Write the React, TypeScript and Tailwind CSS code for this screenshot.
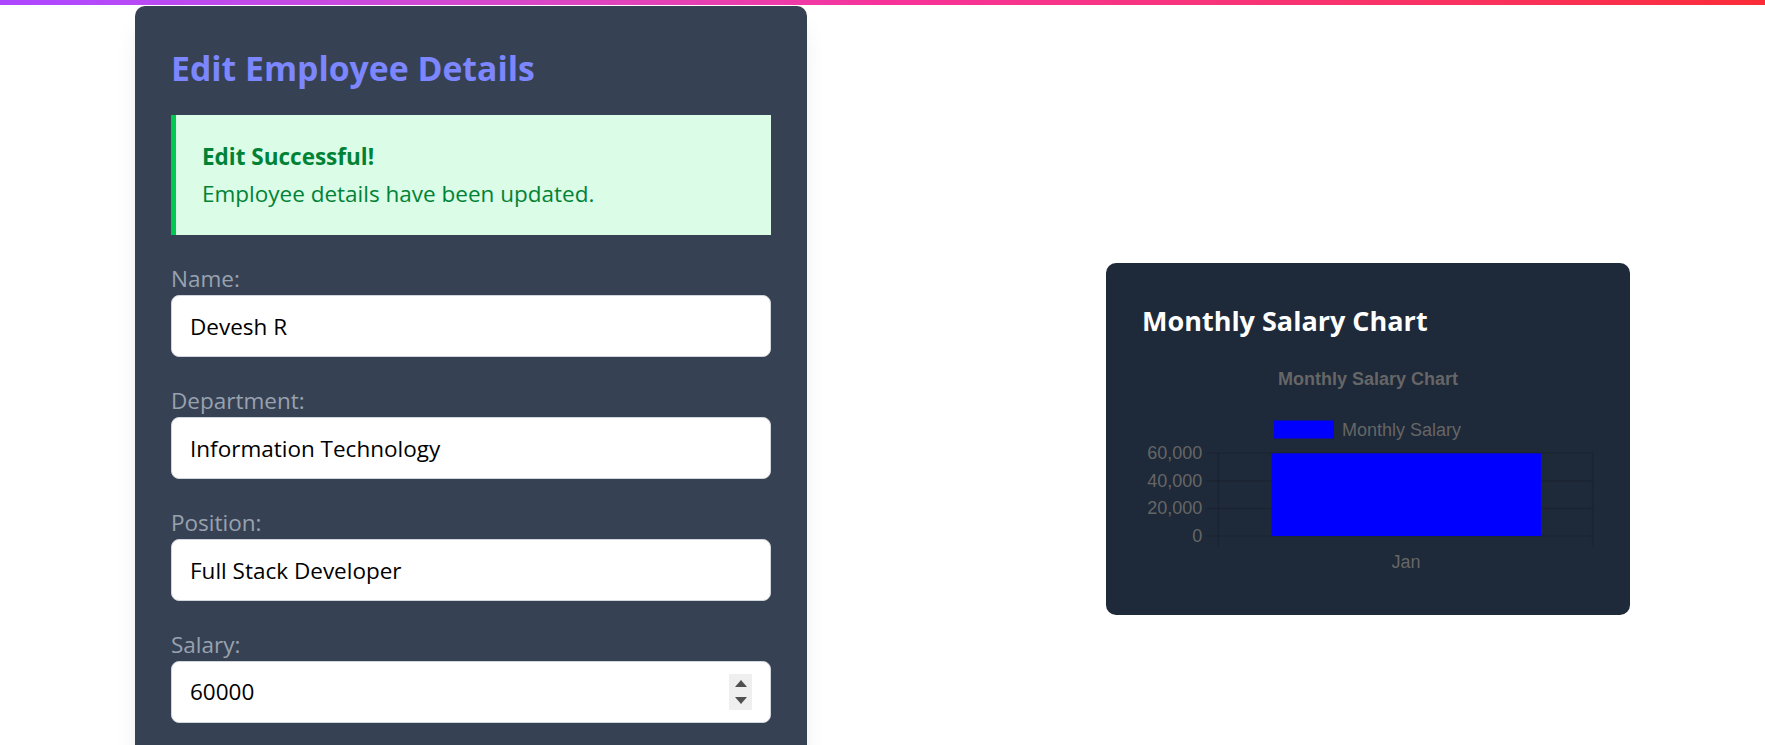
import React from "react";

const fields = [
  { label: "Name:", value: "Devesh R" },
  { label: "Department:", value: "Information Technology" },
  { label: "Position:", value: "Full Stack Developer" },
];

// bar chart drawn the way chart.js renders it (scaled canvas)
const SalaryChart: React.FC = () => {
  const grid = [99.3, 126.9, 154.5, 182];
  const ticks = ["60,000", "40,000", "20,000", "0"];

  return (
    <svg
      width="452"
      height="226"
      viewBox="0 0 452 226"
      className="block font-['Liberation_Sans',Arial,sans-serif]"
    >
      <text x="226" y="31" textAnchor="middle" fontWeight="bold" fontSize="18" fill="#666">
        Monthly Salary Chart
      </text>

      {/* legend */}
      <rect x="132" y="66.5" width="60" height="18" fill="#0000ff" />
      <text x="200" y="81.7" fontSize="18" fill="#666">
        Monthly Salary
      </text>

      {/* grid */}
      {grid.map((y) => (
        <line key={y} x1="64.7" x2="450.7" y1={y} y2={y} stroke="rgba(0,0,0,0.12)" strokeWidth="1.5" />
      ))}
      <line x1="76.3" x2="76.3" y1="99.3" y2="192.7" stroke="rgba(0,0,0,0.12)" strokeWidth="1.5" />
      <line x1="450.7" x2="450.7" y1="99.3" y2="192.7" stroke="rgba(0,0,0,0.12)" strokeWidth="1.5" />

      {/* bar */}
      <rect x="129.7" y="99.3" width="269.3" height="82.7" fill="#0000ff" />

      {ticks.map((t, i) => (
        <text key={t} x="60.3" y={grid[i] + 5.6} textAnchor="end" fontSize="18" fill="#666">
          {t}
        </text>
      ))}
      <text x="264" y="214" textAnchor="middle" fontSize="18" fill="#666">
        Jan
      </text>
    </svg>
  );
};

const App: React.FC = () => {
  return (
    <div className="min-h-screen bg-white font-['Open_Sans',sans-serif]">
      <div className="h-[5px] bg-linear-to-r from-purple-500 via-pink-500 to-red-500" />

      <div className="mt-px flex items-start justify-between px-[135px]">
        {/* Edit form */}
        <div className="w-[672px] rounded-[10px] bg-gray-700 p-9 shadow-xl">
          <h1 className="mb-[21px] text-[33.75px] font-bold leading-[52px] text-indigo-400">
            Edit Employee Details
          </h1>

          <div className="mb-[28px] border-l-[5px] border-green-500 bg-green-100 pt-[26px] pb-[26px] pl-[26px] pr-6 text-[22.5px] leading-[31px] text-green-700">
            <p className="mb-[6px] font-bold">Edit Successful!</p>
            <p>Employee details have been updated.</p>
          </div>

          {fields.map((f) => (
            <div key={f.label} className="mb-[28px]">
              <label className="block text-[22.5px] leading-[32px] text-gray-400">{f.label}</label>
              <input
                type="text"
                defaultValue={f.value}
                className="block h-[62px] w-full rounded-lg border border-gray-300 bg-white px-[18px] text-[22.5px] text-black outline-none"
              />
            </div>
          ))}

          <div>
            <label className="block text-[22.5px] leading-[32px] text-gray-400">Salary:</label>
            <div className="flex h-[62px] w-full items-center rounded-lg border border-gray-300 bg-white pl-[18px] pr-[18px]">
              <input
                type="text"
                defaultValue="60000"
                className="min-w-0 flex-1 bg-transparent text-[22.5px] text-black outline-none"
              />
              <div className="flex h-[36px] w-[23px] flex-col items-center justify-center gap-[10px] bg-[#efefef]">
                <svg width="12" height="7" viewBox="0 0 12 7">
                  <path d="M6 0L12 7H0Z" fill="#505050" />
                </svg>
                <svg width="12" height="7" viewBox="0 0 12 7">
                  <path d="M0 0H12L6 7Z" fill="#505050" />
                </svg>
              </div>
            </div>
          </div>
        </div>

        {/* Chart */}
        <div className="mt-[257px] w-[524px] rounded-[10px] bg-gray-800 px-9 pt-9 pb-[35px]">
          <h2 className="mb-[11px] text-[27px] font-bold leading-[44px] text-white">Monthly Salary Chart</h2>
          <SalaryChart />
        </div>
      </div>
    </div>
  );
};

export default App;
